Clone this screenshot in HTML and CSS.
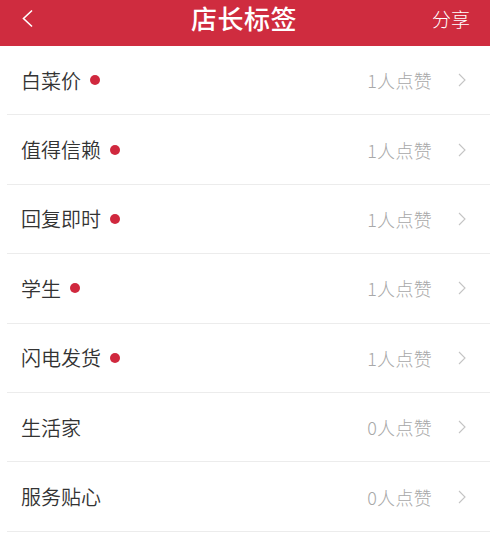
FILE: index.html
```html
<!DOCTYPE html>
<html lang="zh-CN">
<head>
    <meta charset="UTF-8">
    <meta name="viewport" content="width=device-width, initial-scale=1.0">
    <title>店长标签</title>
    <link rel="stylesheet" href="styles.css">
</head>
<body>

    <!-- Top bar -->
    <div class="top-bar">
        <span class="back-btn">
            <svg width="13" height="19" viewBox="0 0 13 19"><polyline points="11,1.5 2.5,9.5 11,17.5" fill="none" stroke="#fff" stroke-width="1.6"/></svg>
        </span>
        <h1 class="page-title">店长标签</h1>
        <span class="share-btn">分享</span>
    </div>

    <!-- Tag list -->
    <ul class="tag-list">
        <li class="tag-row">
            <span class="tag-name">白菜价<i class="dot"></i></span>
            <span class="tag-count">1人点赞</span>
            <span class="arrow"><svg width="8" height="14" viewBox="0 0 8 14"><polyline points="1,1 7,7 1,13" fill="none" stroke="#c4c4c4" stroke-width="1.1"/></svg></span>
        </li>
        <li class="tag-row">
            <span class="tag-name">值得信赖<i class="dot"></i></span>
            <span class="tag-count">1人点赞</span>
            <span class="arrow"><svg width="8" height="14" viewBox="0 0 8 14"><polyline points="1,1 7,7 1,13" fill="none" stroke="#c4c4c4" stroke-width="1.1"/></svg></span>
        </li>
        <li class="tag-row">
            <span class="tag-name">回复即时<i class="dot"></i></span>
            <span class="tag-count">1人点赞</span>
            <span class="arrow"><svg width="8" height="14" viewBox="0 0 8 14"><polyline points="1,1 7,7 1,13" fill="none" stroke="#c4c4c4" stroke-width="1.1"/></svg></span>
        </li>
        <li class="tag-row">
            <span class="tag-name">学生<i class="dot"></i></span>
            <span class="tag-count">1人点赞</span>
            <span class="arrow"><svg width="8" height="14" viewBox="0 0 8 14"><polyline points="1,1 7,7 1,13" fill="none" stroke="#c4c4c4" stroke-width="1.1"/></svg></span>
        </li>
        <li class="tag-row">
            <span class="tag-name">闪电发货<i class="dot"></i></span>
            <span class="tag-count">1人点赞</span>
            <span class="arrow"><svg width="8" height="14" viewBox="0 0 8 14"><polyline points="1,1 7,7 1,13" fill="none" stroke="#c4c4c4" stroke-width="1.1"/></svg></span>
        </li>
        <li class="tag-row">
            <span class="tag-name">生活家</span>
            <span class="tag-count">0人点赞</span>
            <span class="arrow"><svg width="8" height="14" viewBox="0 0 8 14"><polyline points="1,1 7,7 1,13" fill="none" stroke="#c4c4c4" stroke-width="1.1"/></svg></span>
        </li>
        <li class="tag-row">
            <span class="tag-name">服务贴心</span>
            <span class="tag-count">0人点赞</span>
            <span class="arrow"><svg width="8" height="14" viewBox="0 0 8 14"><polyline points="1,1 7,7 1,13" fill="none" stroke="#c4c4c4" stroke-width="1.1"/></svg></span>
        </li>
    </ul>

</body>
</html>
```

FILE: styles.css
```css
body {
    margin: 0;
    padding: 0;
    background-color: #fff;
    font-family: 'Noto Sans CJK SC', 'Noto Sans', sans-serif;
    color: #333;
    overflow: hidden;
}

/* Red header */
.top-bar {
    height: 46px;
    background-color: #cf2c3f;
    display: flex;
    align-items: flex-start;
    justify-content: space-between;
    padding: 0 20px 0 21px;
    box-sizing: border-box;
    color: #fff;
}

.back-btn {
    margin-top: 9px;
    width: 60px;
}

.page-title {
    margin: 0;
    padding-top: 1px;
    padding-right: 3px;
    font-size: 26px;
    font-weight: 500;
    line-height: 34px;
    letter-spacing: 0.5px;
}

.share-btn {
    width: 60px;
    text-align: right;
    font-size: 19px;
    font-weight: 300;
    line-height: 37px;
}

/* Tag rows */
.tag-list {
    list-style: none;
    margin: 0;
    padding: 0 0 0 7px;
}

.tag-row {
    height: 69.4px;
    box-sizing: border-box;
    border-bottom: 1px solid #ececec;
    display: flex;
    align-items: center;
    padding: 0 24px 0 15px;
}

.tag-name {
    flex: 1;
    display: flex;
    align-items: center;
    font-size: 20px;
    font-weight: 350;
    color: #333;
    margin-left: -1px;
}

.dot {
    width: 10px;
    height: 10px;
    border-radius: 50%;
    background-color: #d0283e;
    margin-left: 9px;
}

.tag-count {
    font-size: 18px;
    font-weight: 300;
    color: #a8a8a8;
    margin-right: 26px;
    letter-spacing: 0.3px;
}

.arrow {
    display: flex;
}
```
